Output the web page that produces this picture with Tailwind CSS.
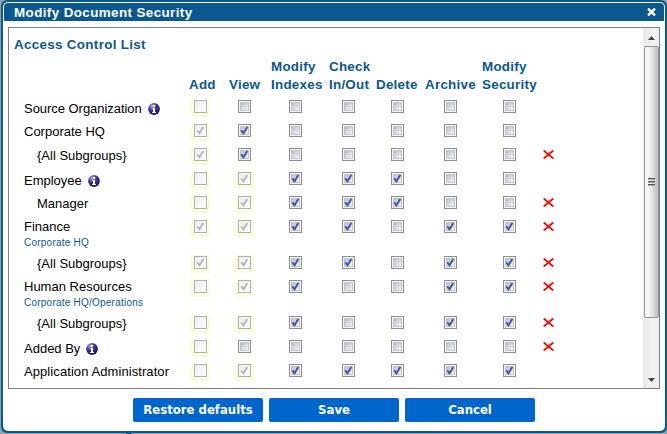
<!DOCTYPE html>
<html lang="en">
<head>
<meta charset="utf-8">
<title>Modify Document Security</title>
<script src="https://cdn.jsdelivr.net/npm/@tailwindcss/browser@4"></script>
</head>
<body class="w-[667px] h-[434px] overflow-hidden bg-[#8fa3ae] font-['Liberation_Sans',Arial,sans-serif] text-[13px] text-black">
<svg width="0" height="0" class="absolute">
  <defs>
    <linearGradient id="box" x1="0" y1="0" x2="1" y2="1"><stop offset="0" stop-color="#b4bac8"/><stop offset="1" stop-color="#f8f8f8"/></linearGradient>
    <linearGradient id="dim" x1="0" y1="0" x2="1" y2="1"><stop offset="0" stop-color="#efefef"/><stop offset="1" stop-color="#fcfcfc"/></linearGradient>
    <radialGradient id="ball" cx=".35" cy=".25" r=".8"><stop offset="0" stop-color="#a9a9e0"/><stop offset=".45" stop-color="#3d3899"/><stop offset="1" stop-color="#17105c"/></radialGradient>
  </defs>
</svg>
<div class="h-[433px] pl-px bg-[#8fa3ae]">
  <div class="h-[433px] w-[666px] rounded-[6px] bg-[#0b588e] pt-[2px] px-[2px] pb-[2px]">
    <div class="h-[429px] w-[662px] rounded-[5px] bg-white pt-px px-px flex flex-col">
      <header class="h-[18px] shrink-0 rounded-t-[4px] bg-[#0b588e] flex items-center justify-between pl-[10px] pr-[8px] text-white">
        <h1 class="pt-[2px] font-bold text-[13.4px] leading-[18px] tracking-[0.4px] whitespace-nowrap">Modify Document Security</h1>
        <svg width="9" height="8" viewBox="0 0 9 8" stroke="#fff" stroke-width="2.4"><path d="M1 .6 8 7.4M8 .6 1 7.4"/></svg>
      </header>
      <main class="mt-[6px] ml-[4px] w-[652px] h-[362px] shrink-0 border border-[#808080] flex overflow-hidden">
        <section class="w-[634px] h-[360px] overflow-hidden">
          <h2 class="pl-[5px] pt-[8px] h-[28px] font-bold text-[13.4px] leading-[18px] text-[#0b588e] tracking-[0.32px]">Access Control List</h2>
          <div class="h-[43px] pl-[180px] flex items-end font-bold text-[13.4px] text-[#0b588e] leading-[18px] tracking-[0.25px] whitespace-nowrap pb-[5px]">
            <span class="w-[40px]">Add</span><span class="w-[42px]">View</span><span class="w-[58px]">Modify<br>Indexes</span><span class="w-[47px]">Check<br>In/Out</span><span class="w-[49px]">Delete</span><span class="w-[57px]">Archive</span><span>Modify<br>Security</span>
          </div>
          <div id="acl"></div>
        </section>
        <aside class="w-[16px] h-[360px] flex flex-col items-center bg-linear-to-r from-[#e8e8e8] via-[#f0f0f0] to-[#f0f0f0]">
          <div class="h-[18px] flex items-center"><svg width="7" height="4" viewBox="0 0 7 4" class="mt-px"><path d="M3.5 0 7 4H0z" fill="#444"/></svg></div>
          <div class="w-[15px] h-[272px] rounded-[2px] border border-[#979797] bg-linear-to-r from-[#f5f5f5] from-30% to-[#bebec2] flex items-center justify-center">
            <svg width="7" height="8" viewBox="0 0 7 8" shape-rendering="crispEdges"><path d="M0 0h7v1H0zM0 3h7v1H0zM0 6h7v1H0z" fill="#555"/><path d="M0 1h7v1H0zM0 4h7v1H0zM0 7h7v1H0z" fill="#aaa"/></svg>
          </div>
          <div class="grow"></div>
          <div class="h-[17px] flex"><svg width="7" height="4" viewBox="0 0 7 4" class="mt-[7px]"><path d="M0 0h7L3.5 4z" fill="#444"/></svg></div>
        </aside>
      </main>
      <footer class="pt-[9px] pl-[129px] flex gap-[6px] font-['DejaVu_Sans_Condensed','DejaVu_Sans',Verdana,sans-serif] font-bold text-[13px] text-white leading-[24px]">
        <button class="w-[130px] h-[24px] rounded-[2px] bg-[#0066cc] whitespace-nowrap">Restore defaults</button>
        <button class="w-[130px] h-[24px] rounded-[2px] bg-[#0066cc]">Save</button>
        <button class="w-[130px] h-[24px] rounded-[2px] bg-[#0066cc]">Cancel</button>
      </footer>
    </div>
  </div>
</div>
<div class="ml-[126px] w-[5px] h-px bg-[#0b4a78]"></div>
<script>
// Box states: "-" empty, "x" checked, "d" disabled, "c" disabled and checked.
const rows = [
  ['Source Organization', 'd------', {info: 1}],
  ['Corporate HQ', 'cx-----', {}],
  ['{All Subgroups}', 'cx-----', {sub: 1, del: 1}],
  ['Employee', 'dcxxx--', {info: 1}],
  ['Manager', 'dcxxx--', {sub: 1, del: 1}],
  ['Finance', 'ccxx-xx', {del: 1, path: 'Corporate HQ'}],
  ['{All Subgroups}', 'ccxx-xx', {sub: 1, del: 1}],
  ['Human Resources', 'dcx--xx', {del: 1, path: 'Corporate HQ/Operations'}],
  ['{All Subgroups}', 'dcx--xx', {sub: 1, del: 1}],
  ['Added By', 'd------', {info: 1, del: 1}],
  ['Application Administrator', 'dcxxxxx', {}],
  ['', 'dcxxxxx', {}],
];
const tick = c => `<path d="M3.3 6.2 5.5 9.3 9.3 3" fill="none" stroke="${c}" stroke-width="1.9"/>`;
function box(s) {
  const off = s === 'd' || s === 'c';
  const art = off
    ? `<rect x=".5" y=".5" width="12" height="12" fill="url(#dim)" stroke="#b1b1b1"/>${s === 'c' ? tick('#b5b5b5') : ''}`
    : `<rect x=".5" y=".5" width="12" height="12" fill="#f4f4f4" stroke="#8e8f8f"/><rect x="2.5" y="2.5" width="8" height="8" fill="url(#box)" stroke="#c3c6cc"/>${s === 'x' ? tick('#3b52a0') : ''}`;
  return `<span class="w-[20px] h-[18px] pl-[4px] pt-px ${off ? 'bg-[#fbfbdf]' : ''}"><svg width="13" height="13" viewBox="0 0 13 13" class="block">${art}</svg></span>`;
}
const info = `<svg width="12" height="12" viewBox="0 0 12 12" class="mt-[3px] ml-[6px]"><circle cx="6" cy="6" r="5.9" fill="url(#ball)"/><path d="M5 2h2v2H5zM4.3 5H7v4h.9v1H4.2V9H5V6h-.7z" fill="#fff"/></svg>`;
const cross = `<svg width="11" height="9" viewBox="0 0 11 9" class="mt-[3px]" fill="none" stroke="#e8120c" stroke-width="1.9"><path d="M.7.5 10.3 8.5M10.3.5.7 8.5"/></svg>`;
document.getElementById('acl').innerHTML = rows.map(([name, s, o]) => `
  <div class="${o.path ? 'h-[36px]' : 'h-[24px]'} ${o.sub ? 'pl-[28px]' : 'pl-[15px]'}">
    <div class="grid ${o.sub ? 'grid-cols-[153px_44px_51px_53px_49px_53px_59px_44px_40px]' : 'grid-cols-[166px_44px_51px_53px_49px_53px_59px_44px_40px]'}">
      <span class="flex h-[18px] leading-[18px] whitespace-nowrap ${name.length > 20 ? 'tracking-[0.08px]' : name.length > 17 ? 'tracking-[-0.04px]' : ''} ${o.info ? 'pt-px' : ''} ${o.path ? '-mt-px' : ''}">${name}${o.info ? info : ''}</span>
      ${[...s].map(box).join('')}${o.del ? cross : ''}
    </div>
    ${o.path ? `<div class="text-[10px] leading-[12px] tracking-[0.23px] text-[#0b588e]">${o.path}</div>` : ''}
  </div>`).join('');
</script>
</body>
</html>
